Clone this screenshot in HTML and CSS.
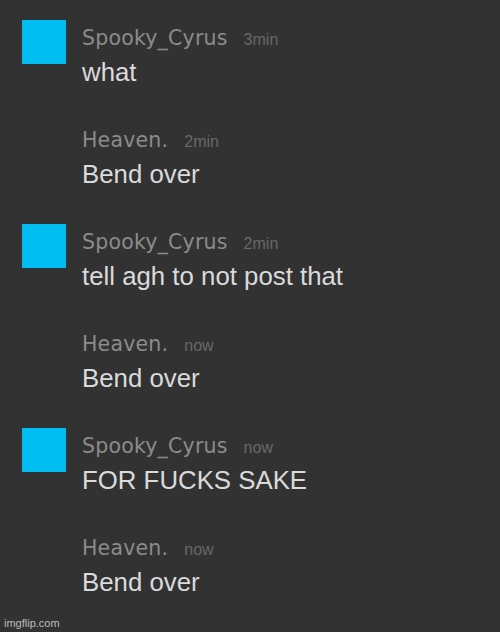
FILE: index.html
```html
<!DOCTYPE html>
<html lang="en">
	<head>
		<meta charset="UTF-8" />
		<meta name="viewport" content="width=device-width, initial-scale=1.0" />
		<title>Chat</title>
		<link rel="stylesheet" href="styles.css">
	</head>
	<body>
		<div class="chat">
			<div class="msg">
				<div class="avatar"></div>
				<div class="body">
					<div class="head">
						<span class="name">Spooky_Cyrus</span>
						<span class="time">3min</span>
					</div>
					<p class="text">what</p>
				</div>
			</div>
			<div class="msg">
				<div class="avatar none"></div>
				<div class="body">
					<div class="head">
						<span class="name">Heaven.</span>
						<span class="time">2min</span>
					</div>
					<p class="text">Bend over</p>
				</div>
			</div>
			<div class="msg">
				<div class="avatar"></div>
				<div class="body">
					<div class="head">
						<span class="name">Spooky_Cyrus</span>
						<span class="time">2min</span>
					</div>
					<p class="text">tell agh to not post that</p>
				</div>
			</div>
			<div class="msg">
				<div class="avatar none"></div>
				<div class="body">
					<div class="head">
						<span class="name">Heaven.</span>
						<span class="time">now</span>
					</div>
					<p class="text">Bend over</p>
				</div>
			</div>
			<div class="msg">
				<div class="avatar"></div>
				<div class="body">
					<div class="head">
						<span class="name">Spooky_Cyrus</span>
						<span class="time">now</span>
					</div>
					<p class="text">FOR FUCKS SAKE</p>
				</div>
			</div>
			<div class="msg">
				<div class="avatar none"></div>
				<div class="body">
					<div class="head">
						<span class="name">Heaven.</span>
						<span class="time">now</span>
					</div>
					<p class="text">Bend over</p>
				</div>
			</div>
		</div>
		<div class="mark">imgflip.com</div>
	</body>
</html>
```

FILE: styles.css
```css
* {
	margin: 0;
	padding: 0;
	box-sizing: border-box;
}

body {
	background-color: #323232;
	width: 500px;
	height: 632px;
	overflow: hidden;
	font-family: "Liberation Sans", Arial, sans-serif;
}

.chat {
	padding: 20px 0 0 22px;
	display: flex;
	flex-direction: column;
	gap: 35px;
}

.msg {
	display: flex;
	gap: 16px;
}

.avatar {
	width: 44px;
	height: 44px;
	flex: none;
	background-color: #00bdf2;
}
.avatar.none {
	background-color: transparent;
}

.body {
	padding-top: 6px;
}

.head {
	display: flex;
	align-items: baseline;
	gap: 16px;
	height: 24px;
}

.name {
	font-family: "DejaVu Sans", Verdana, sans-serif;
	font-size: 20.5px;
	line-height: 24px;
	letter-spacing: 0.2px;
	color: #8b8b8b;
}

.time {
	font-size: 16px;
	color: #686868;
}

.text {
	margin-top: 7px;
	font-size: 25.8px;
	line-height: 30px;
	color: #dadada;
}

.mark {
	position: absolute;
	left: 4px;
	bottom: 3px;
	font-size: 11px;
	color: #bdbdbd;
}
```
